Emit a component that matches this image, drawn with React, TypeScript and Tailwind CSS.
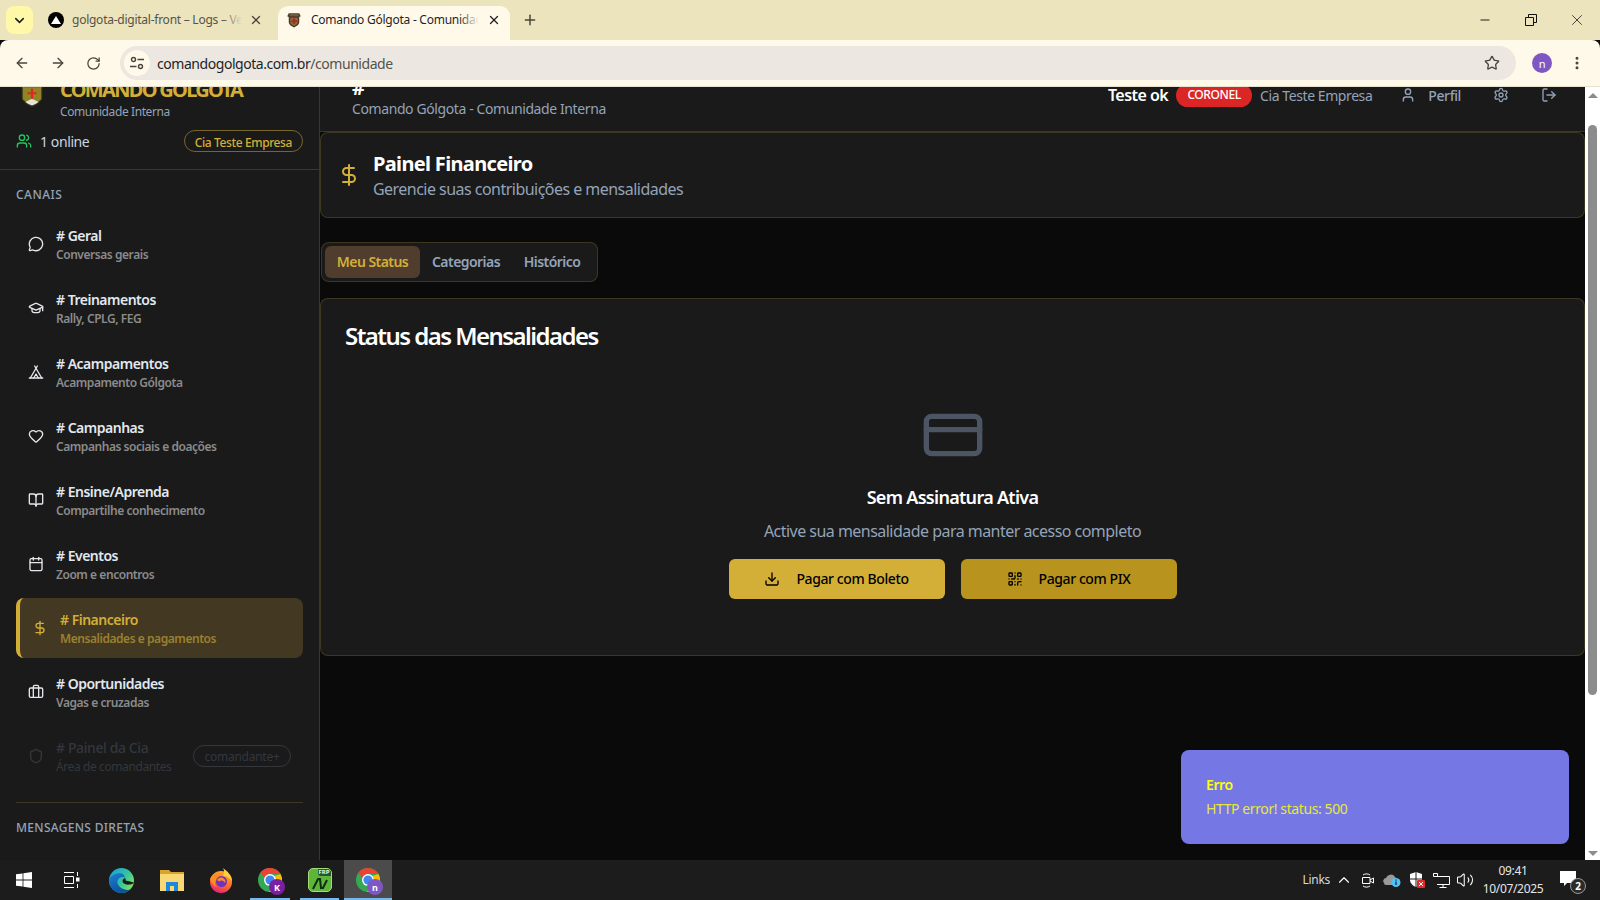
import React from "react";
import {
  MessageCircle, GraduationCap, Tent, Heart, BookOpen, Calendar, DollarSign, Briefcase, Shield,
  Users, User, Settings, LogOut, CreditCard, Download, QrCode, ChevronDown, X, Plus, ArrowLeft,
  ArrowRight, RotateCw, Star, MoreVertical, Minus, ChevronUp, Volume2,
} from "lucide-react";

const channels = [
  { icon: MessageCircle, title: "# Geral", sub: "Conversas gerais" },
  { icon: GraduationCap, title: "# Treinamentos", sub: "Rally, CPLG, FEG" },
  { icon: Tent, title: "# Acampamentos", sub: "Acampamento Gólgota" },
  { icon: Heart, title: "# Campanhas", sub: "Campanhas sociais e doações" },
  { icon: BookOpen, title: "# Ensine/Aprenda", sub: "Compartilhe conhecimento" },
  { icon: Calendar, title: "# Eventos", sub: "Zoom e encontros" },
];

function Crest({ size }: { size: number }) {
  return (
    <svg width={size} height={size} viewBox="0 0 24 24" className="shrink-0">
      <path d="M4 2h16v4l1 1-1 1v6c0 3-3 6-8 8-5-2-8-5-8-8V8L3 7l1-1z" fill="#2b2a12" />
      <path d="M5 3h14v13c-2 2-4 3-7 4-3-1-5-2-7-4z" fill="#8f8526" />
      <path d="M6 4h12v3H6z" fill="#5a5322" />
      <path d="M11.2 8h1.6v2.6h2.6v1.6h-2.6V16h-1.6v-3.8H8.6v-1.6h2.6z" fill="#e3261d" />
      <path d="M12 15.5l5 2.5c-1.500 1.200-3 2-5 2.600-2-.6-3.500-1.400-5-2.600z" fill="#e4e4dc" />
    </svg>
  );
}

function Favicon() {
  return (
    <svg width="18" height="18" viewBox="0 0 24 24" className="shrink-0">
      <path d="M5 3h14l2 4-2 1v7c0 3-3 5-7 7-4-2-7-4-7-7V8L3 7z" fill="#4b3a2a" />
      <path d="M7 9h10v6c0 2-2 3-5 5-3-2-5-3-5-5z" fill="#8b6b3f" />
      <path d="M10.500 10h3v2.500H16v2h-2.500V17h-3v-2.500H8v-2h2.500z" fill="#b3261e" />
      <path d="M6 4h12v3H6z" fill="#6e5a40" />
    </svg>
  );
}

function ChromeLogo({ badge, color }: { badge: string; color: string }) {
  return (
    <div className="relative w-6 h-6">
      <svg width="24" height="24" viewBox="0 0 24 24">
        <circle cx="12" cy="12" r="12" fill="#34a853" />
        <path d="M12 0a12 12 0 0 1 10.4 6H12a6 6 0 0 0-5.6 3.8L2.2 5A12 12 0 0 1 12 0z" fill="#ea4335" />
        <path d="M22.4 6A12 12 0 0 1 11 24l5.3-8.4A6 6 0 0 0 16.5 8z" fill="#fbbc04" />
        <circle cx="12" cy="12" r="6" fill="#fff" />
        <circle cx="12" cy="12" r="4.6" fill="#4285f4" />
      </svg>
      <span className={`absolute -right-[3px] -bottom-[3px] w-4 h-4 rounded-full flex items-center justify-center text-[9px] leading-none text-white font-bold ${color}`}>
        {badge}
      </span>
    </div>
  );
}

function Tray({ w, children }: { w: string; children: React.ReactNode }) {
  return <div className={`${w} h-full flex items-center justify-center`}>{children}</div>;
}

function Taskbar() {
  return (
    <div className="h-10 shrink-0 bg-[#1c1c1c] flex items-center text-white tracking-normal">
      <div className="w-12 h-full flex items-center justify-center">
        <svg width="16" height="16" viewBox="0 0 16 16" fill="#fff">
          <path d="M0 2.3 6.6 1.4v6.2H0zM7.4 1.3 16 0v7.6H7.4zM0 8.4h6.6v6.2L0 13.7zM7.4 8.4H16V16l-8.6-1.3z" />
        </svg>
      </div>
      <div className="w-[47px] h-full flex items-center justify-center">
        <svg width="17" height="16" viewBox="0 0 17 16" fill="none" stroke="#fff" strokeWidth="1">
          <path d="M1 .5h10M1 15.5h10M1.5 4.500h9v7h-9zM14.500 0v4M14.500 12v4" />
          <rect x="13.500" y="6" width="2.500" height="3" fill="#fff" />
        </svg>
      </div>
      <div className="w-[53px] h-full flex items-center justify-center">
        <svg width="25" height="25" viewBox="0 0 24 24">
          <defs>
            <linearGradient id="edgeA" x1="0.1" y1="0.1" x2="1" y2="0.7">
              <stop offset="0" stopColor="#1ba3d6" />
              <stop offset="0.55" stopColor="#35c3a0" />
              <stop offset="1" stopColor="#86e25a" />
            </linearGradient>
            <linearGradient id="edgeB" x1="0" y1="0" x2="0.6" y2="1">
              <stop offset="0" stopColor="#1d7fd0" />
              <stop offset="1" stopColor="#0b4f9c" />
            </linearGradient>
          </defs>
          <circle cx="12" cy="12" r="12" fill="url(#edgeA)" />
          <path d="M.2 11c2-4 6-6 10-6 3 0 5 2 5 4-3-1-6 0-7 3-1 5 4 9 10 9 1 0 2-.5 3-1-2.500 2.500-5.500 4-9 4C5 24-.5 18 .2 11z" fill="url(#edgeB)" />
          <path d="M24 14c-.5 1-2 2-6 2-3 0-5-1.500-5-3.500 0-1.500 1-2.500 2.500-3 .5 1 .5 1.500.5 2.500 2 .5 5 1 8 2z" fill="#1c1c1c" />
        </svg>
      </div>
      <div className="w-[48px] h-full flex items-center justify-center">
        <svg width="24" height="22" viewBox="0 0 24 22">
          <path d="M0 1h9l2 2h13v19H0z" fill="#d9a32f" />
          <path d="M0 5h24v17H0z" fill="#f8d775" />
          <path d="M6 13h12v9h-4v-5h-4v5H6z" fill="#1f87d8" />
        </svg>
      </div>
      <div className="w-[49px] h-full flex items-center justify-center">
        <svg width="24" height="25" viewBox="0 0 24 25">
          <defs>
            <linearGradient id="ffA" x1="0.7" y1="0" x2="0.3" y2="1">
              <stop offset="0" stopColor="#ffb02e" />
              <stop offset="0.55" stopColor="#ff6a2a" />
              <stop offset="1" stopColor="#e3207f" />
            </linearGradient>
          </defs>
          <circle cx="12" cy="14" r="11" fill="url(#ffA)" />
          <path d="M14 0c4 3 9 7 9 13-3-4-6-5-9-5 2-3 1-6 0-8z" fill="#ffcf3a" />
          <path d="M1 11c1-2 2-4 4-5 0 2 1 3 2 3 1-1 2-2 4-2-1 2 0 2 2 3-4-1-7 1-7 5 0 2 1 3 2 4-3-1-6-4-7-8z" fill="#ff8f1f" />
          <circle cx="12.500" cy="13.500" r="5.500" fill="#6a34c4" />
          <path d="M8 12c1-2 4-3 6-2 2 1 3 3 2 5-1-2-3-3-5-2-1 .5-2 0-3-1z" fill="#ff8a2a" />
        </svg>
      </div>
      <div className="w-[50px] h-full relative flex items-center justify-center">
        <ChromeLogo badge="K" color="bg-[#7b1fa2]" />
        <span className="absolute bottom-0 left-[5px] right-[5px] h-[2px] bg-[#76b9ed]" />
      </div>
      <div className="w-[49px] h-full relative flex items-center justify-center">
        <div className="relative w-6 h-6 rounded-[5px] bg-[#5fb53a] border border-[#a3dd73] flex items-center justify-center overflow-hidden">
          <svg width="16" height="13" viewBox="0 0 16 13" fill="none" stroke="#0b2e14" strokeWidth="2" className="mt-[7px]">
            <path d="M1 12 6 2h2l1 9h2l4-8" />
          </svg>
          <span className="absolute top-0 right-0 bg-[#1f5a2a] rounded-bl-[3px] text-[6px] leading-[7px] font-bold text-[#e8f7dc] px-[1px]">FRP</span>
        </div>
        <span className="absolute bottom-0 left-[5px] right-[5px] h-[2px] bg-[#76b9ed]" />
      </div>
      <div className="w-[48px] h-full relative flex items-center justify-center bg-[#4b4b4b]">
        <ChromeLogo badge="n" color="bg-[#7e57c2]" />
        <span className="absolute bottom-0 left-0 right-0 h-[2px] bg-[#76b9ed]" />
      </div>
      <div className="flex-1" />
      <span className="text-[12px] text-[#d8d8d8] mr-[2px] tracking-[-0.3px]">Links</span>
      <Tray w="w-[24px]"><ChevronUp size={18} strokeWidth={1.5} color="#fff" /></Tray>
      <Tray w="w-[24px]">
        <svg width="14" height="16" viewBox="0 0 14 16" fill="none" stroke="#fff" strokeWidth="1">
          <path d="M1.500 5.500h7.500v6H1.500zM9 8l3.500-2v5L9 9M2 3c2-1.500 5-1.500 7 0M2 14c2 1.500 5 1.500 7 0" />
        </svg>
      </Tray>
      <Tray w="w-[24px]">
        <svg width="18" height="14" viewBox="0 0 18 14">
          <path d="M1 10a3 3 0 0 1 2-5 5 5 0 0 1 9-1 4 4 0 0 1 2 3v5H3a2 2 0 0 1-2-2z" fill="#9a9a9a" />
          <circle cx="13" cy="9.500" r="4.500" fill="#4fc3f7" />
          <rect x="12.400" y="8.500" width="1.200" height="3.500" fill="#123" />
          <rect x="12.400" y="6.500" width="1.200" height="1.200" fill="#123" />
        </svg>
      </Tray>
      <Tray w="w-[25px]">
        <svg width="16" height="16" viewBox="0 0 16 16">
          <path d="M7 0 1 2v6c0 3 3 6 6 7 3-1 6-4 6-7V2z" fill="#fff" />
          <path d="M7 0v15M1 7h12" stroke="#1c1c1c" strokeWidth="1" />
          <rect x="8" y="8" width="8" height="8" rx="1" fill="#e02b2b" />
          <path d="m10 10 4 4m0-4-4 4" stroke="#fff" strokeWidth="1" />
        </svg>
      </Tray>
      <Tray w="w-[24px]">
        <svg width="17" height="15" viewBox="0 0 17 15" fill="none" stroke="#fff" strokeWidth="1">
          <path d="M4 3.500h12.500v8H4M.5.5h4v3h-4zM10 11.500v3M6.500 14.500h7" />
        </svg>
      </Tray>
      <Tray w="w-[24px]"><Volume2 size={18} strokeWidth={1.4} color="#fff" /></Tray>
      <div className="w-[70px] ml-[1px] h-full flex flex-col items-center justify-center text-[12px] leading-[18px] text-[#e6e6e6] whitespace-nowrap tracking-[-0.35px]">
        <span>09:41</span>
        <span>10/07/2025</span>
      </div>
      <div className="w-[52px] pr-[6px] h-full flex items-center justify-center">
        <div className="relative w-6 h-6">
          <svg width="18" height="18" viewBox="0 0 18 18" className="mt-[2px]">
            <path d="M1 1h16v12H8l-3 3v-3H1z" fill="#fff" />
          </svg>
          <span className="absolute -right-[3px] -bottom-[2px] w-4 h-4 rounded-full bg-[#2b2b2b] border border-[#999] text-[10px] leading-none font-bold flex items-center justify-center">2</span>
        </div>
      </div>
    </div>
  );
}

function BrowserChrome() {
  return (
    <div className="shrink-0 tracking-[-0.25px]">
      <div className="h-10 bg-[#ebe4bd] flex items-end">
        <div className="w-[27px] h-[28px] mb-[6px] ml-[6px] rounded-lg bg-[#fff8a8] flex items-center justify-center">
          <ChevronDown size={15} strokeWidth={2.5} color="#1f1f1f" />
        </div>
        <div className="w-[239px] ml-[6px] h-[34px] flex items-center pl-[9px] pr-2 pb-[6px]">
          <span className="w-4 h-4 rounded-full bg-black flex items-center justify-center shrink-0">
            <span className="w-0 h-0 border-l-[5px] border-r-[5px] border-b-[8px] border-l-transparent border-r-transparent border-b-white" />
          </span>
          <span className="relative ml-2 w-[170px] overflow-hidden whitespace-nowrap text-[12px] text-[#55534a]">
            golgota-digital-front – Logs – Vercel
            <span className="absolute right-0 top-0 bottom-0 w-5 bg-gradient-to-r from-[#ebe4bd00] to-[#ebe4bd]" />
          </span>
          <X size={14} color="#47453c" strokeWidth={2.2} className="ml-[7px] shrink-0" />
        </div>
        <div className="w-[232px] h-[34px] rounded-t-[10px] bg-[#fff9ea] flex items-center pl-[7px] pr-2 pb-[6px]">
          <Favicon />
          <span className="relative ml-2 w-[168px] overflow-hidden whitespace-nowrap text-[12px] text-[#1f1f1f]">
            Comando Gólgota - Comunidade Interna
            <span className="absolute right-0 top-0 bottom-0 w-5 bg-gradient-to-r from-[#fff9ea00] to-[#fff9ea]" />
          </span>
          <X size={14} color="#1f1f1f" strokeWidth={2.2} className="ml-[8px] shrink-0" />
        </div>
        <div className="h-[34px] w-10 flex items-center justify-center pb-[6px]">
          <Plus size={16} color="#47453c" strokeWidth={2.2} />
        </div>
        <div className="flex-1" />
        <div className="h-10 flex items-center self-start">
          <div className="w-[46px] flex justify-center"><Minus size={14} strokeWidth={1.6} color="#111" /></div>
          <div className="w-[46px] flex justify-center">
            <svg width="12" height="12" viewBox="0 0 12 12" fill="none" stroke="#111"><path d="M.5 3.500h8v8h-8zM3.500 3V.5h8v8H9" /></svg>
          </div>
          <div className="w-[46px] flex justify-center"><X size={18} strokeWidth={1} color="#111" /></div>
        </div>
      </div>
      <div className="h-[47px] bg-[#fff9ea] rounded-t-lg flex items-center border-b border-[#e6e0cc]">
        <div className="w-[116px] pl-[14px] flex items-center gap-5 shrink-0">
          <ArrowLeft size={16} color="#47453c" strokeWidth={2} />
          <ArrowRight size={16} color="#47453c" strokeWidth={2} />
          <RotateCw size={15} color="#47453c" strokeWidth={2} />
        </div>
        <div className="ml-[4px] w-[1396px] h-[34px] rounded-full bg-[#ece8e1] flex items-center pl-1">
          <span className="w-[26px] h-[26px] rounded-full bg-[#fff9ea] flex items-center justify-center">
            <svg width="14" height="14" viewBox="0 0 14 14" fill="none" stroke="#47453c" strokeWidth="1.400">
              <circle cx="3.500" cy="3.500" r="2" />
              <path d="M7.500 3.500H14M0 10.500h6.500" />
              <circle cx="10.500" cy="10.500" r="2" />
            </svg>
          </span>
          <span className="ml-[7px] text-[14px] text-[#1f1f1f] tracking-[-0.45px]">comandogolgota.com.br<span className="text-[#55534a]">/comunidade</span></span>
          <div className="flex-1" />
          <Star size={16} color="#47453c" strokeWidth={2} className="mr-4" />
        </div>
        <div className="w-[52px] flex justify-center">
          <span className="w-5 h-5 rounded-full bg-[#7e57c2] text-white text-[11px] leading-none flex items-center justify-center">n</span>
        </div>
        <MoreVertical size={16} color="#47453c" strokeWidth={2.5} className="ml-[1px]" />
      </div>
    </div>
  );
}

function Sidebar() {
  return (
    <aside className="w-[320px] shrink-0 h-full overflow-hidden bg-[#1a1a1a] border-r border-[#d4af37]/20 text-white">
      <div className="h-[83px] flex flex-col border-b border-[#d4af37]/20 px-4">
        <div className="shrink-0 flex items-start gap-3 -mt-[11px]">
          <div className="mt-[2px]"><Crest size={32} /></div>
          <div>
            <div className="text-[20px] leading-[28px] font-bold text-[#d4af37] whitespace-nowrap tracking-[-1.7px]">COMANDO GÓLGOTA</div>
            <div className="text-[12px] leading-[16px] text-[#94a3b8]">Comunidade Interna</div>
          </div>
        </div>
        <div className="shrink-0 flex items-center justify-between mt-[10px]">
          <div className="flex items-center gap-2">
            <Users size={16} color="#22c55e" />
            <span className="text-[14px] text-[#cbd5e1]">1 online</span>
          </div>
          <span className="h-[22px] px-[10px] pt-[3px] rounded-full border border-[#d4af37]/50 text-[#d4af37] text-[12px] font-medium flex items-center">Cia Teste Empresa</span>
        </div>
      </div>
      <div className="p-4">
        <div className="text-[12px] leading-[16px] font-medium tracking-[0.45px] text-[#94a3b8] mb-3 relative top-[1px]">CANAIS</div>
        <div className="flex flex-col gap-1">
          {channels.map((c) => (
            <div key={c.title} className="h-[60px] px-3 flex items-center gap-3">
              <c.icon size={16} color="#e5e7eb" className="shrink-0" />
              <div>
                <div className="text-[14px] leading-5 font-semibold text-[#e2e8f0] tracking-[-0.5px]">{c.title}</div>
                <div className="text-[12px] leading-4 font-semibold text-[#8b8b8b] relative top-[1px] tracking-[-0.45px]">{c.sub}</div>
              </div>
            </div>
          ))}
          <div className="h-[60px] px-3 flex items-center gap-3 rounded-lg bg-[#433821] border-l-4 border-[#d4af37]">
            <DollarSign size={16} color="#d4af37" className="shrink-0" />
            <div>
              <div className="text-[14px] leading-5 font-semibold text-[#d4af37] tracking-[-0.5px]"># Financeiro</div>
              <div className="text-[12px] leading-4 font-semibold text-[#9a8130] relative top-[1px] tracking-[-0.45px]">Mensalidades e pagamentos</div>
            </div>
          </div>
          <div className="h-[60px] px-3 flex items-center gap-3">
            <Briefcase size={16} color="#e5e7eb" className="shrink-0" />
            <div>
              <div className="text-[14px] leading-5 font-semibold text-[#e2e8f0] tracking-[-0.5px]"># Oportunidades</div>
              <div className="text-[12px] leading-4 font-semibold text-[#8b8b8b] relative top-[1px] tracking-[-0.45px]">Vagas e cruzadas</div>
            </div>
          </div>
          <div className="h-[60px] pl-3 pr-[12px] flex items-center gap-3">
            <Shield size={16} color="#33373d" className="shrink-0" />
            <div className="flex-1">
              <div className="text-[14px] leading-5 font-medium text-[#33373d]"># Painel da Cia</div>
              <div className="text-[12px] leading-4 text-[#33373d] relative top-[1px]">Área de comandantes</div>
            </div>
            <span className="h-[22px] w-[98px] pt-[2px] rounded-full border border-[#33373d] text-[#33373d] text-[12px] tracking-[-0.25px] flex items-center justify-center">comandante+</span>
          </div>
        </div>
        <div className="mt-4 pt-4 border-t border-[#d4af37]/20">
          <div className="text-[12px] leading-[16px] font-medium tracking-[0.3px] text-[#94a3b8] relative top-[1px]">MENSAGENS DIRETAS</div>
        </div>
      </div>
    </aside>
  );
}

function Main() {
  return (
    <main className="flex-1 min-w-0 h-full overflow-hidden bg-[#0a0a0a] flex flex-col">
      <header className="h-[45px] shrink-0 bg-[#1a1a1a] border-b border-[#d4af37]/20 overflow-hidden flex justify-between pl-8 pr-[28px]">
        <div className="-mt-[13px]">
          <div className="text-[20px] leading-[28px] font-bold text-white">#</div>
          <div className="text-[14px] leading-5 text-[#94a3b8] -mt-[3px]">Comando Gólgota - Comunidade Interna</div>
        </div>
        <div className="h-5 -mt-[2px] flex items-center text-[14px]">
          <span className="font-semibold text-[16px] text-white whitespace-nowrap tracking-[-0.55px]">Teste ok</span>
          <span className="ml-2 w-[76px] h-[23px] rounded-full bg-[#dc2626] text-white text-[12px] font-medium flex items-center justify-center">CORONEL</span>
          <span className="ml-2 text-[#94a3b8] whitespace-nowrap tracking-[-0.42px]">Cia Teste Empresa</span>
          <User size={16} color="#94a3b8" className="ml-[28px]" />
          <span className="ml-[12px] font-medium text-[#94a3b8]">Perfil</span>
          <Settings size={16} color="#94a3b8" className="ml-[32px]" />
          <LogOut size={16} color="#94a3b8" className="ml-[32px]" />
        </div>
      </header>
      <section className="h-[86px] shrink-0 rounded-lg bg-[#1a1a1a] border border-[#d4af37]/20 flex items-center pl-4 gap-3">
        <DollarSign size={24} color="#d4af37" />
        <div>
          <div className="text-[20px] leading-[28px] font-bold text-white tracking-[-0.66px] relative top-[1px]">Painel Financeiro</div>
          <div className="text-[16px] leading-6 text-[#94a3b8] tracking-[-0.53px]">Gerencie suas contribuições e mensalidades</div>
        </div>
      </section>
      <div className="mt-6 ml-[1px] w-[277px] h-10 shrink-0 rounded-lg bg-[#1a1a1a] border border-[#d4af37]/20 flex items-center px-[3px] text-[14px] font-semibold text-[#94a3b8] tracking-[-0.55px]">
        <span className="w-[95px] h-8 pb-[2px] rounded-md bg-[#513d2e] text-[#d4af37] flex items-center justify-center">Meu Status</span>
        <span className="w-[92px] h-8 pb-[2px] flex items-center justify-center">Categorias</span>
        <span className="w-[82px] h-8 pb-[2px] -ml-[1px] flex items-center justify-center">Histórico</span>
      </div>
      <section className="mt-4 h-[358px] shrink-0 rounded-lg bg-[#1a1a1a] border border-[#d4af37]/20 pt-[21px] px-6 flex flex-col items-center">
        <h2 className="self-start text-[24px] leading-8 font-semibold text-white tracking-[-1.55px]">Status das Mensalidades</h2>
        <CreditCard size={64} color="#4b5563" className="mt-[51px] shrink-0" strokeWidth={2} />
        <h3 className="mt-4 text-[18px] leading-7 font-semibold text-white tracking-[-0.7px]">Sem Assinatura Ativa</h3>
        <p className="mt-2 text-[16px] leading-6 text-[#94a3b8] tracking-[-0.53px]">Active sua mensalidade para manter acesso completo</p>
        <div className="mt-4 flex gap-4">
          <button className="relative w-[216px] h-10 pb-[1px] rounded-md bg-[#d4af37] text-black text-[14px] font-medium flex items-center justify-center gap-4">
            <Download size={16} />Pagar com Boleto
          </button>
          <button className="relative w-[216px] h-10 pb-[1px] rounded-md bg-[#b8941f] text-black text-[14px] font-medium flex items-center justify-center gap-4">
            <QrCode size={16} />Pagar com PIX
          </button>
        </div>
      </section>
    </main>
  );
}

function Scrollbar() {
  return (
    <div className="w-[15px] shrink-0 h-full bg-white flex flex-col items-center">
      <div className="h-[38px] w-full flex items-start justify-center pt-[6px]">
        <span className="w-0 h-0 border-l-[5px] border-r-[5px] border-b-[5px] border-l-transparent border-r-transparent border-b-[#8c8c8c]" />
      </div>
      <div className="w-[9px] h-[570px] rounded-full bg-[#8c8c8c]" />
      <div className="flex-1" />
      <span className="mb-[4px] w-0 h-0 border-l-[5px] border-r-[5px] border-t-[5px] border-l-transparent border-r-transparent border-t-[#8c8c8c]" />
    </div>
  );
}

export default function App() {
  return (
    <div className="relative w-[1600px] h-[900px] overflow-hidden flex flex-col bg-[#0a0a0a] font-['Noto_Sans',sans-serif] tracking-[-0.4px]">
      <BrowserChrome />
      <div className="flex-1 min-h-0 flex">
        <Sidebar />
        <Main />
        <Scrollbar />
      </div>
      <Taskbar />
      <div className="absolute left-[1181px] top-[750px] w-[388px] h-[94px] rounded-lg bg-[#7477e4] pl-[25px] pr-6 flex flex-col justify-center text-[14px] leading-6 text-[#ffff00]">
        <div className="font-semibold">Erro</div>
        <div className="text-[#e8e83a]">HTTP error! status: 500</div>
      </div>
    </div>
  );
}
